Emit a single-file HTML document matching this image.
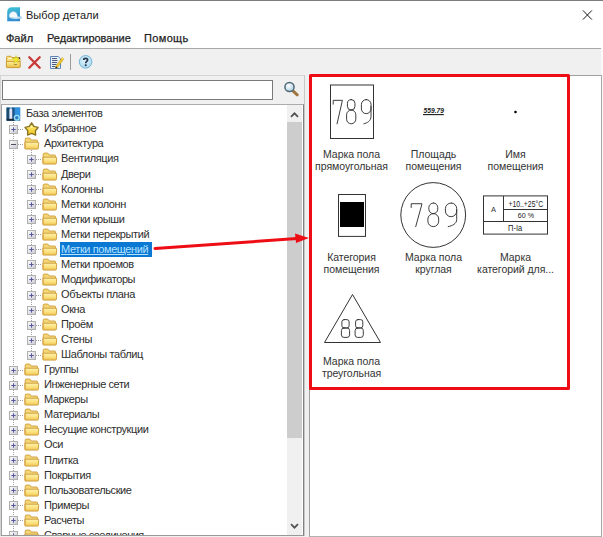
<!DOCTYPE html>
<html><head><meta charset="utf-8"><style>
*{margin:0;padding:0;box-sizing:border-box}
html,body{width:603px;height:537px;overflow:hidden;background:#f0f0f0;font-family:"Liberation Sans", sans-serif;}
.a{position:absolute}
.t{position:absolute;white-space:nowrap;font-size:11px;line-height:15px;color:#1e1e1e}
.tr{position:absolute;white-space:nowrap;font-size:11px;line-height:15px;color:#2e2e2e;letter-spacing:-0.4px}
.lb{position:absolute;white-space:nowrap;font-size:10.5px;line-height:12px;color:#333;text-align:center;width:90px;letter-spacing:-0.05px}
</style></head><body>

<div class="a" style="left:0;top:0;width:603px;height:48px;background:#fff"></div>
<div class="a" style="left:0;top:0;width:603px;height:1px;background:#7c7c7c"></div>
<div class="a" style="left:0;top:48px;width:601px;height:1px;background:#a8a8a8"></div>
<div class="a" style="left:601px;top:48px;width:2px;height:489px;background:#f9f9f9"></div>
<svg class="a" style="left:6px;top:6px" width="18" height="17" viewBox="0 0 18 17">
<defs><linearGradient id="tig" x1="0" y1="0" x2="0.2" y2="1"><stop offset="0" stop-color="#40c4d4"/><stop offset="1" stop-color="#2f8cd2"/></linearGradient></defs>
<path d="M1.2 15.2 V6.2 Q1.2 1.2 6.2 1.2 H14 V15.2 Z" fill="url(#tig)"/>
<path d="M3 10.6 C2.6 4.6 10.8 3.4 11.4 9.2 L11.8 10.4 C13.6 10.6 15.6 10.8 15.9 11.6 C15 12.9 11 13.2 7.5 12.8 C5 12.5 3.2 11.8 3 10.6 Z" fill="#f4f9fc" stroke="#6aaed8" stroke-width="0.6"/>
<path d="M4.4 8.4 C5 6.6 7 5.8 9 6.3" stroke="#d4e8f4" stroke-width="0.8" fill="none"/>
<path d="M3.8 11.3 C7 12.1 11.5 12.1 15.4 11.5" stroke="#9ccae6" stroke-width="0.6" fill="none"/>
</svg>
<div class="t" style="left:26px;top:8px;color:#1a1a1a">Выбор детали</div>
<svg class="a" style="left:582px;top:10px" width="11" height="11" viewBox="0 0 11 11">
<path d="M0.9 0.4 L9.9 9.6 M9.9 0.4 L0.9 9.6" stroke="#1a1a1a" stroke-width="1"/></svg>
<div class="t" style="left:6px;top:31px;-webkit-text-stroke:0.25px #1e1e1e">Файл</div>
<div class="t" style="left:47px;top:31px;-webkit-text-stroke:0.25px #1e1e1e">Редактирование</div>
<div class="t" style="left:144px;top:31px;letter-spacing:0.35px;-webkit-text-stroke:0.25px #1e1e1e">Помощь</div>
<svg class="a" style="left:5px;top:54px" width="17" height="16" viewBox="0 0 17 16">
<defs><linearGradient id="fg" x1="0" y1="0" x2="0" y2="1"><stop offset="0" stop-color="#fff0a0"/><stop offset="1" stop-color="#e9bc40"/></linearGradient></defs>
<path d="M1.5 13 V3.3 Q1.5 2.3 2.5 2.3 H6 L7 3.5 H14.2 Q15 3.5 15 4.3 V13 Z" fill="#f4dc7a" stroke="#c89a34" stroke-width="0.9"/>
<path d="M1.4 7.5 H15.1 V12.8 Q15.1 13.6 14.3 13.6 H2.2 Q1.4 13.6 1.4 12.8 Z" fill="url(#fg)" stroke="#c89a34" stroke-width="0.9"/>
<path d="M3 4.5 H7" stroke="#fff6c0" stroke-width="1"/>
<path d="M11 1.5 L11.9 4.4 L14.6 4.6 L12.5 6.4 L13.2 9.2 L11 7.6 L8.8 9.2 L9.5 6.4 L7.4 4.6 L10.1 4.4 Z" fill="#f2ec2a" stroke="#c4c020" stroke-width="0.5"/>
<path d="M9 10.5 H12" stroke="#9a8a30" stroke-width="0.9"/>
<path d="M14.2 3 L14.6 5" stroke="#404040" stroke-width="1"/>
</svg>
<svg class="a" style="left:27px;top:55px" width="15" height="15" viewBox="0 0 15 15">
<path d="M2.3 2.3 L12.7 12.7 M12.7 2.3 L2.3 12.7" stroke="#c83838" stroke-width="2.3" stroke-linecap="round"/>
</svg>
<svg class="a" style="left:49px;top:55px" width="16" height="15" viewBox="0 0 16 15">
<path d="M1.5 1.5 H9.2 L11.5 3.8 V13.5 H1.5 Z" fill="#e8eff8" stroke="#5c86b6"/>
<path d="M3 3.5 H8 M3 5.5 H8.5 M3 7.5 H8 M3 9.5 H7.5 M3 11.5 H6" stroke="#4a5a78" stroke-width="1"/>
<path d="M6.8 11.2 L13.2 2.4 L15 3.8 L8.6 12.6 L6.4 13.4 Z" fill="#f4ca28" stroke="#a88420" stroke-width="0.5"/>
<path d="M13.2 2.4 L15 3.8 L14.4 4.6 L12.6 3.2 Z" fill="#fff080"/>
<path d="M6.4 13.4 L6.8 11.2 L8.6 12.6 Z" fill="#1a1a1a"/>
</svg>
<div class="a" style="left:70px;top:54px;width:1px;height:16px;background:#9a9a9a"></div>
<svg class="a" style="left:78px;top:54px" width="16" height="16" viewBox="0 0 16 16">
<defs><radialGradient id="hg" cx="0.45" cy="0.4" r="0.65"><stop offset="0" stop-color="#e0f4fc"/><stop offset="1" stop-color="#a8d8ee"/></radialGradient></defs>
<circle cx="7.6" cy="7.8" r="6.3" fill="url(#hg)" stroke="#74b4d8" stroke-width="1"/>
<path d="M5.7 5.9 C5.7 3.9 9.6 3.8 9.6 5.9 C9.6 7.4 7.7 7.4 7.7 9.2" stroke="#26374e" stroke-width="1.7" fill="none"/>
<rect x="6.8" y="10.3" width="1.8" height="1.8" fill="#26374e"/>
</svg>
<div class="a" style="left:0;top:75px;width:305px;height:461px;border:1px solid #d4d4d4;border-right-color:#c8c8c8;background:#f0f0f0"></div>
<div class="a" style="left:2px;top:80px;width:271px;height:20px;border:1px solid #7a7a7a;background:#fff"></div>
<svg class="a" style="left:283px;top:81px" width="16" height="16" viewBox="0 0 16 16">
<defs><radialGradient id="mg" cx="0.4" cy="0.35" r="0.7"><stop offset="0" stop-color="#ffffff"/><stop offset="1" stop-color="#a8d0e0"/></radialGradient></defs>
<path d="M10.2 10.2 L14.2 13.8" stroke="#a07440" stroke-width="3" stroke-linecap="round"/>
<circle cx="6.5" cy="6" r="4.6" fill="url(#mg)" stroke="#506878" stroke-width="1.5"/>
</svg>
<div class="a" style="left:1px;top:104px;width:303px;height:432px;border:1px solid #828790;border-top-color:#acacac;border-left-color:#a0a0a0;border-bottom-color:#999999;border-right-color:#808080;background:#fff;overflow:hidden" id="tp">
<div class="a" style="left:285px;top:0;width:15px;height:430px;background:#f0f0f0"></div>
<div class="a" style="left:285px;top:17px;width:15px;height:316px;background:#cdcdcd"></div>
<svg class="a" style="left:287px;top:6px" width="11" height="8" viewBox="0 0 11 8"><path d="M2 5.8 L5.5 2.3 L9 5.8" stroke="#505050" stroke-width="1.7" fill="none"/></svg>
<svg class="a" style="left:287px;top:417px" width="11" height="8" viewBox="0 0 11 8"><path d="M2 2.2 L5.5 5.7 L9 2.2" stroke="#505050" stroke-width="1.7" fill="none"/></svg>
<div class="a" style="left:11px;top:15px;width:1px;height:416px;background:repeating-linear-gradient(#a0a0a0 0 1px,transparent 1px 2px)"></div>
<div class="a" style="left:29px;top:43px;width:1px;height:206px;background:repeating-linear-gradient(#a0a0a0 0 1px,transparent 1px 2px)"></div>
<svg width="0" height="0" style="position:absolute"><defs>
<linearGradient id="fold" x1="0" y1="0" x2="0" y2="1"><stop offset="0" stop-color="#fff3b0"/><stop offset="0.55" stop-color="#fbe07c"/><stop offset="1" stop-color="#f0c452"/></linearGradient>
<linearGradient id="box" x1="0" y1="0" x2="1" y2="1"><stop offset="0" stop-color="#ffffff"/><stop offset="1" stop-color="#c8c8d0"/></linearGradient>
<linearGradient id="stg" x1="0" y1="0" x2="0" y2="1"><stop offset="0" stop-color="#fff490"/><stop offset="1" stop-color="#f2c418"/></linearGradient>
</defs></svg>
<svg class="a" style="left:4.0px;top:1.5px" width="15" height="15" viewBox="0 0 15 15">
<rect x="0.5" y="0.5" width="13.7" height="13.3" fill="#2276b4"/>
<rect x="0.6" y="0.6" width="2.8" height="12" fill="#1b4c6c"/>
<rect x="6.2" y="0.6" width="2.4" height="11" fill="#1d5488"/>
<path d="M3.4 12 V3 Q3.4 1.2 4.8 1.2 Q6.2 1.2 6.2 3 V12 Z" fill="#e6e4f2"/>
<rect x="8.8" y="0.6" width="5.3" height="10.5" fill="#2f92de"/>
<rect x="0.6" y="11.8" width="8" height="2" fill="#1a2c3c"/>
<circle cx="10.8" cy="10.8" r="2.4" fill="#2a7ec8" stroke="#9ee0f6" stroke-width="1.3"/>
</svg>
<div class="tr" style="left:24px;top:1.3px">База элементов</div>
<div class="a" style="left:16px;top:24px;width:6px;height:1px;background:repeating-linear-gradient(90deg,#a0a0a0 0 1px,transparent 1px 2px)"></div>
<svg class="a" style="left:7.0px;top:20.0px" width="9" height="9" viewBox="0 0 9 9"><rect x="0.5" y="0.5" width="8" height="8" fill="url(#box)" stroke="#b0b0b0"/><path d="M2.3 4.5 H6.7 M4.5 2.3 V6.7" stroke="#5858a0" stroke-width="1"/></svg>
<svg class="a" style="left:21.6px;top:16.6px" width="16" height="15" viewBox="0 0 16 15"><path d="M7.60 0.80 L9.95 4.36 L14.16 5.44 L11.40 8.74 L11.61 13.06 L7.60 11.40 L3.59 13.06 L3.80 8.74 L1.04 5.44 L5.25 4.36 Z" fill="url(#stg)" stroke="#8a7428" stroke-width="1.4" stroke-linejoin="round"/><path d="M7.6 4 L8.6 6 L6.4 6 Z" fill="#fffbd0" opacity="0.8"/></svg>
<div class="tr" style="left:42px;top:16.3px">Избранное</div>
<div class="a" style="left:16px;top:39px;width:6px;height:1px;background:repeating-linear-gradient(90deg,#a0a0a0 0 1px,transparent 1px 2px)"></div>
<svg class="a" style="left:7.0px;top:35.0px" width="9" height="9" viewBox="0 0 9 9"><rect x="0.5" y="0.5" width="8" height="8" fill="url(#box)" stroke="#b0b0b0"/><path d="M2 4.5 H7" stroke="#505060" stroke-width="1"/></svg>
<svg class="a" style="left:22.2px;top:32.4px" width="16" height="13" viewBox="0 0 16 13">
<path d="M1.2 11.5 V2.2 Q1.2 1.1 2.3 1.1 H5.4 Q6.1 1.1 6.5 1.7 L7.3 3 H12.6 Q13.5 3 13.5 3.9 V11.5 Z" fill="#f4d676" stroke="#cc9c3c" stroke-width="0.9"/>
<path d="M0.8 5.2 H14.1 Q14.8 5.2 14.7 5.9 L14.3 11.4 Q14.2 12.1 13.5 12.1 H1.6 Q0.9 12.1 0.9 11.4 Z" fill="url(#fold)" stroke="#c99a3a" stroke-width="0.9"/>
<path d="M1.6 6.2 V11.3" stroke="#e2a848" stroke-width="0.8"/>
</svg>
<div class="tr" style="left:42px;top:31.4px">Архитектура</div>
<div class="a" style="left:34px;top:54px;width:6px;height:1px;background:repeating-linear-gradient(90deg,#a0a0a0 0 1px,transparent 1px 2px)"></div>
<svg class="a" style="left:25.0px;top:50.0px" width="9" height="9" viewBox="0 0 9 9"><rect x="0.5" y="0.5" width="8" height="8" fill="url(#box)" stroke="#b0b0b0"/><path d="M2.3 4.5 H6.7 M4.5 2.3 V6.7" stroke="#5858a0" stroke-width="1"/></svg>
<svg class="a" style="left:40.2px;top:47.4px" width="16" height="13" viewBox="0 0 16 13">
<path d="M1.2 11.5 V2.2 Q1.2 1.1 2.3 1.1 H5.4 Q6.1 1.1 6.5 1.7 L7.3 3 H12.6 Q13.5 3 13.5 3.9 V11.5 Z" fill="#f4d676" stroke="#cc9c3c" stroke-width="0.9"/>
<path d="M0.8 5.2 H14.1 Q14.8 5.2 14.7 5.9 L14.3 11.4 Q14.2 12.1 13.5 12.1 H1.6 Q0.9 12.1 0.9 11.4 Z" fill="url(#fold)" stroke="#c99a3a" stroke-width="0.9"/>
<path d="M1.6 6.2 V11.3" stroke="#e2a848" stroke-width="0.8"/>
</svg>
<div class="tr" style="left:59px;top:46.4px">Вентиляция</div>
<div class="a" style="left:34px;top:69px;width:6px;height:1px;background:repeating-linear-gradient(90deg,#a0a0a0 0 1px,transparent 1px 2px)"></div>
<svg class="a" style="left:25.0px;top:65.0px" width="9" height="9" viewBox="0 0 9 9"><rect x="0.5" y="0.5" width="8" height="8" fill="url(#box)" stroke="#b0b0b0"/><path d="M2.3 4.5 H6.7 M4.5 2.3 V6.7" stroke="#5858a0" stroke-width="1"/></svg>
<svg class="a" style="left:40.2px;top:62.5px" width="16" height="13" viewBox="0 0 16 13">
<path d="M1.2 11.5 V2.2 Q1.2 1.1 2.3 1.1 H5.4 Q6.1 1.1 6.5 1.7 L7.3 3 H12.6 Q13.5 3 13.5 3.9 V11.5 Z" fill="#f4d676" stroke="#cc9c3c" stroke-width="0.9"/>
<path d="M0.8 5.2 H14.1 Q14.8 5.2 14.7 5.9 L14.3 11.4 Q14.2 12.1 13.5 12.1 H1.6 Q0.9 12.1 0.9 11.4 Z" fill="url(#fold)" stroke="#c99a3a" stroke-width="0.9"/>
<path d="M1.6 6.2 V11.3" stroke="#e2a848" stroke-width="0.8"/>
</svg>
<div class="tr" style="left:59px;top:61.5px">Двери</div>
<div class="a" style="left:34px;top:84px;width:6px;height:1px;background:repeating-linear-gradient(90deg,#a0a0a0 0 1px,transparent 1px 2px)"></div>
<svg class="a" style="left:25.0px;top:80.0px" width="9" height="9" viewBox="0 0 9 9"><rect x="0.5" y="0.5" width="8" height="8" fill="url(#box)" stroke="#b0b0b0"/><path d="M2.3 4.5 H6.7 M4.5 2.3 V6.7" stroke="#5858a0" stroke-width="1"/></svg>
<svg class="a" style="left:40.2px;top:77.6px" width="16" height="13" viewBox="0 0 16 13">
<path d="M1.2 11.5 V2.2 Q1.2 1.1 2.3 1.1 H5.4 Q6.1 1.1 6.5 1.7 L7.3 3 H12.6 Q13.5 3 13.5 3.9 V11.5 Z" fill="#f4d676" stroke="#cc9c3c" stroke-width="0.9"/>
<path d="M0.8 5.2 H14.1 Q14.8 5.2 14.7 5.9 L14.3 11.4 Q14.2 12.1 13.5 12.1 H1.6 Q0.9 12.1 0.9 11.4 Z" fill="url(#fold)" stroke="#c99a3a" stroke-width="0.9"/>
<path d="M1.6 6.2 V11.3" stroke="#e2a848" stroke-width="0.8"/>
</svg>
<div class="tr" style="left:59px;top:76.6px">Колонны</div>
<div class="a" style="left:34px;top:99px;width:6px;height:1px;background:repeating-linear-gradient(90deg,#a0a0a0 0 1px,transparent 1px 2px)"></div>
<svg class="a" style="left:25.0px;top:95.0px" width="9" height="9" viewBox="0 0 9 9"><rect x="0.5" y="0.5" width="8" height="8" fill="url(#box)" stroke="#b0b0b0"/><path d="M2.3 4.5 H6.7 M4.5 2.3 V6.7" stroke="#5858a0" stroke-width="1"/></svg>
<svg class="a" style="left:40.2px;top:92.6px" width="16" height="13" viewBox="0 0 16 13">
<path d="M1.2 11.5 V2.2 Q1.2 1.1 2.3 1.1 H5.4 Q6.1 1.1 6.5 1.7 L7.3 3 H12.6 Q13.5 3 13.5 3.9 V11.5 Z" fill="#f4d676" stroke="#cc9c3c" stroke-width="0.9"/>
<path d="M0.8 5.2 H14.1 Q14.8 5.2 14.7 5.9 L14.3 11.4 Q14.2 12.1 13.5 12.1 H1.6 Q0.9 12.1 0.9 11.4 Z" fill="url(#fold)" stroke="#c99a3a" stroke-width="0.9"/>
<path d="M1.6 6.2 V11.3" stroke="#e2a848" stroke-width="0.8"/>
</svg>
<div class="tr" style="left:59px;top:91.6px">Метки колонн</div>
<div class="a" style="left:34px;top:114px;width:6px;height:1px;background:repeating-linear-gradient(90deg,#a0a0a0 0 1px,transparent 1px 2px)"></div>
<svg class="a" style="left:25.0px;top:110.0px" width="9" height="9" viewBox="0 0 9 9"><rect x="0.5" y="0.5" width="8" height="8" fill="url(#box)" stroke="#b0b0b0"/><path d="M2.3 4.5 H6.7 M4.5 2.3 V6.7" stroke="#5858a0" stroke-width="1"/></svg>
<svg class="a" style="left:40.2px;top:107.7px" width="16" height="13" viewBox="0 0 16 13">
<path d="M1.2 11.5 V2.2 Q1.2 1.1 2.3 1.1 H5.4 Q6.1 1.1 6.5 1.7 L7.3 3 H12.6 Q13.5 3 13.5 3.9 V11.5 Z" fill="#f4d676" stroke="#cc9c3c" stroke-width="0.9"/>
<path d="M0.8 5.2 H14.1 Q14.8 5.2 14.7 5.9 L14.3 11.4 Q14.2 12.1 13.5 12.1 H1.6 Q0.9 12.1 0.9 11.4 Z" fill="url(#fold)" stroke="#c99a3a" stroke-width="0.9"/>
<path d="M1.6 6.2 V11.3" stroke="#e2a848" stroke-width="0.8"/>
</svg>
<div class="tr" style="left:59px;top:106.7px">Метки крыши</div>
<div class="a" style="left:34px;top:129px;width:6px;height:1px;background:repeating-linear-gradient(90deg,#a0a0a0 0 1px,transparent 1px 2px)"></div>
<svg class="a" style="left:25.0px;top:125.0px" width="9" height="9" viewBox="0 0 9 9"><rect x="0.5" y="0.5" width="8" height="8" fill="url(#box)" stroke="#b0b0b0"/><path d="M2.3 4.5 H6.7 M4.5 2.3 V6.7" stroke="#5858a0" stroke-width="1"/></svg>
<svg class="a" style="left:40.2px;top:122.7px" width="16" height="13" viewBox="0 0 16 13">
<path d="M1.2 11.5 V2.2 Q1.2 1.1 2.3 1.1 H5.4 Q6.1 1.1 6.5 1.7 L7.3 3 H12.6 Q13.5 3 13.5 3.9 V11.5 Z" fill="#f4d676" stroke="#cc9c3c" stroke-width="0.9"/>
<path d="M0.8 5.2 H14.1 Q14.8 5.2 14.7 5.9 L14.3 11.4 Q14.2 12.1 13.5 12.1 H1.6 Q0.9 12.1 0.9 11.4 Z" fill="url(#fold)" stroke="#c99a3a" stroke-width="0.9"/>
<path d="M1.6 6.2 V11.3" stroke="#e2a848" stroke-width="0.8"/>
</svg>
<div class="tr" style="left:59px;top:121.7px">Метки перекрытий</div>
<div class="a" style="left:34px;top:144px;width:6px;height:1px;background:repeating-linear-gradient(90deg,#a0a0a0 0 1px,transparent 1px 2px)"></div>
<svg class="a" style="left:25.0px;top:140.0px" width="9" height="9" viewBox="0 0 9 9"><rect x="0.5" y="0.5" width="8" height="8" fill="url(#box)" stroke="#b0b0b0"/><path d="M2.3 4.5 H6.7 M4.5 2.3 V6.7" stroke="#5858a0" stroke-width="1"/></svg>
<svg class="a" style="left:40.2px;top:137.8px" width="16" height="13" viewBox="0 0 16 13">
<path d="M1.2 11.5 V2.2 Q1.2 1.1 2.3 1.1 H5.4 Q6.1 1.1 6.5 1.7 L7.3 3 H12.6 Q13.5 3 13.5 3.9 V11.5 Z" fill="#f4d676" stroke="#cc9c3c" stroke-width="0.9"/>
<path d="M0.8 5.2 H14.1 Q14.8 5.2 14.7 5.9 L14.3 11.4 Q14.2 12.1 13.5 12.1 H1.6 Q0.9 12.1 0.9 11.4 Z" fill="url(#fold)" stroke="#c99a3a" stroke-width="0.9"/>
<path d="M1.6 6.2 V11.3" stroke="#e2a848" stroke-width="0.8"/>
</svg>
<div class="a" style="left:58px;top:136.5px;width:92px;height:15px;background:#0b78d4"></div>
<div class="tr" style="left:59px;top:136.8px;color:#b4e2ff;text-decoration:underline">Метки помещений</div>
<div class="a" style="left:34px;top:159px;width:6px;height:1px;background:repeating-linear-gradient(90deg,#a0a0a0 0 1px,transparent 1px 2px)"></div>
<svg class="a" style="left:25.0px;top:155.0px" width="9" height="9" viewBox="0 0 9 9"><rect x="0.5" y="0.5" width="8" height="8" fill="url(#box)" stroke="#b0b0b0"/><path d="M2.3 4.5 H6.7 M4.5 2.3 V6.7" stroke="#5858a0" stroke-width="1"/></svg>
<svg class="a" style="left:40.2px;top:152.8px" width="16" height="13" viewBox="0 0 16 13">
<path d="M1.2 11.5 V2.2 Q1.2 1.1 2.3 1.1 H5.4 Q6.1 1.1 6.5 1.7 L7.3 3 H12.6 Q13.5 3 13.5 3.9 V11.5 Z" fill="#f4d676" stroke="#cc9c3c" stroke-width="0.9"/>
<path d="M0.8 5.2 H14.1 Q14.8 5.2 14.7 5.9 L14.3 11.4 Q14.2 12.1 13.5 12.1 H1.6 Q0.9 12.1 0.9 11.4 Z" fill="url(#fold)" stroke="#c99a3a" stroke-width="0.9"/>
<path d="M1.6 6.2 V11.3" stroke="#e2a848" stroke-width="0.8"/>
</svg>
<div class="tr" style="left:59px;top:151.8px">Метки проемов</div>
<div class="a" style="left:34px;top:174px;width:6px;height:1px;background:repeating-linear-gradient(90deg,#a0a0a0 0 1px,transparent 1px 2px)"></div>
<svg class="a" style="left:25.0px;top:170.0px" width="9" height="9" viewBox="0 0 9 9"><rect x="0.5" y="0.5" width="8" height="8" fill="url(#box)" stroke="#b0b0b0"/><path d="M2.3 4.5 H6.7 M4.5 2.3 V6.7" stroke="#5858a0" stroke-width="1"/></svg>
<svg class="a" style="left:40.2px;top:167.9px" width="16" height="13" viewBox="0 0 16 13">
<path d="M1.2 11.5 V2.2 Q1.2 1.1 2.3 1.1 H5.4 Q6.1 1.1 6.5 1.7 L7.3 3 H12.6 Q13.5 3 13.5 3.9 V11.5 Z" fill="#f4d676" stroke="#cc9c3c" stroke-width="0.9"/>
<path d="M0.8 5.2 H14.1 Q14.8 5.2 14.7 5.9 L14.3 11.4 Q14.2 12.1 13.5 12.1 H1.6 Q0.9 12.1 0.9 11.4 Z" fill="url(#fold)" stroke="#c99a3a" stroke-width="0.9"/>
<path d="M1.6 6.2 V11.3" stroke="#e2a848" stroke-width="0.8"/>
</svg>
<div class="tr" style="left:59px;top:166.9px">Модификаторы</div>
<div class="a" style="left:34px;top:190px;width:6px;height:1px;background:repeating-linear-gradient(90deg,#a0a0a0 0 1px,transparent 1px 2px)"></div>
<svg class="a" style="left:25.0px;top:186.0px" width="9" height="9" viewBox="0 0 9 9"><rect x="0.5" y="0.5" width="8" height="8" fill="url(#box)" stroke="#b0b0b0"/><path d="M2.3 4.5 H6.7 M4.5 2.3 V6.7" stroke="#5858a0" stroke-width="1"/></svg>
<svg class="a" style="left:40.2px;top:182.9px" width="16" height="13" viewBox="0 0 16 13">
<path d="M1.2 11.5 V2.2 Q1.2 1.1 2.3 1.1 H5.4 Q6.1 1.1 6.5 1.7 L7.3 3 H12.6 Q13.5 3 13.5 3.9 V11.5 Z" fill="#f4d676" stroke="#cc9c3c" stroke-width="0.9"/>
<path d="M0.8 5.2 H14.1 Q14.8 5.2 14.7 5.9 L14.3 11.4 Q14.2 12.1 13.5 12.1 H1.6 Q0.9 12.1 0.9 11.4 Z" fill="url(#fold)" stroke="#c99a3a" stroke-width="0.9"/>
<path d="M1.6 6.2 V11.3" stroke="#e2a848" stroke-width="0.8"/>
</svg>
<div class="tr" style="left:59px;top:181.9px">Объекты плана</div>
<div class="a" style="left:34px;top:205px;width:6px;height:1px;background:repeating-linear-gradient(90deg,#a0a0a0 0 1px,transparent 1px 2px)"></div>
<svg class="a" style="left:25.0px;top:201.0px" width="9" height="9" viewBox="0 0 9 9"><rect x="0.5" y="0.5" width="8" height="8" fill="url(#box)" stroke="#b0b0b0"/><path d="M2.3 4.5 H6.7 M4.5 2.3 V6.7" stroke="#5858a0" stroke-width="1"/></svg>
<svg class="a" style="left:40.2px;top:197.9px" width="16" height="13" viewBox="0 0 16 13">
<path d="M1.2 11.5 V2.2 Q1.2 1.1 2.3 1.1 H5.4 Q6.1 1.1 6.5 1.7 L7.3 3 H12.6 Q13.5 3 13.5 3.9 V11.5 Z" fill="#f4d676" stroke="#cc9c3c" stroke-width="0.9"/>
<path d="M0.8 5.2 H14.1 Q14.8 5.2 14.7 5.9 L14.3 11.4 Q14.2 12.1 13.5 12.1 H1.6 Q0.9 12.1 0.9 11.4 Z" fill="url(#fold)" stroke="#c99a3a" stroke-width="0.9"/>
<path d="M1.6 6.2 V11.3" stroke="#e2a848" stroke-width="0.8"/>
</svg>
<div class="tr" style="left:59px;top:196.9px">Окна</div>
<div class="a" style="left:34px;top:220px;width:6px;height:1px;background:repeating-linear-gradient(90deg,#a0a0a0 0 1px,transparent 1px 2px)"></div>
<svg class="a" style="left:25.0px;top:216.0px" width="9" height="9" viewBox="0 0 9 9"><rect x="0.5" y="0.5" width="8" height="8" fill="url(#box)" stroke="#b0b0b0"/><path d="M2.3 4.5 H6.7 M4.5 2.3 V6.7" stroke="#5858a0" stroke-width="1"/></svg>
<svg class="a" style="left:40.2px;top:213.0px" width="16" height="13" viewBox="0 0 16 13">
<path d="M1.2 11.5 V2.2 Q1.2 1.1 2.3 1.1 H5.4 Q6.1 1.1 6.5 1.7 L7.3 3 H12.6 Q13.5 3 13.5 3.9 V11.5 Z" fill="#f4d676" stroke="#cc9c3c" stroke-width="0.9"/>
<path d="M0.8 5.2 H14.1 Q14.8 5.2 14.7 5.9 L14.3 11.4 Q14.2 12.1 13.5 12.1 H1.6 Q0.9 12.1 0.9 11.4 Z" fill="url(#fold)" stroke="#c99a3a" stroke-width="0.9"/>
<path d="M1.6 6.2 V11.3" stroke="#e2a848" stroke-width="0.8"/>
</svg>
<div class="tr" style="left:59px;top:212.0px">Проём</div>
<div class="a" style="left:34px;top:235px;width:6px;height:1px;background:repeating-linear-gradient(90deg,#a0a0a0 0 1px,transparent 1px 2px)"></div>
<svg class="a" style="left:25.0px;top:231.0px" width="9" height="9" viewBox="0 0 9 9"><rect x="0.5" y="0.5" width="8" height="8" fill="url(#box)" stroke="#b0b0b0"/><path d="M2.3 4.5 H6.7 M4.5 2.3 V6.7" stroke="#5858a0" stroke-width="1"/></svg>
<svg class="a" style="left:40.2px;top:228.1px" width="16" height="13" viewBox="0 0 16 13">
<path d="M1.2 11.5 V2.2 Q1.2 1.1 2.3 1.1 H5.4 Q6.1 1.1 6.5 1.7 L7.3 3 H12.6 Q13.5 3 13.5 3.9 V11.5 Z" fill="#f4d676" stroke="#cc9c3c" stroke-width="0.9"/>
<path d="M0.8 5.2 H14.1 Q14.8 5.2 14.7 5.9 L14.3 11.4 Q14.2 12.1 13.5 12.1 H1.6 Q0.9 12.1 0.9 11.4 Z" fill="url(#fold)" stroke="#c99a3a" stroke-width="0.9"/>
<path d="M1.6 6.2 V11.3" stroke="#e2a848" stroke-width="0.8"/>
</svg>
<div class="tr" style="left:59px;top:227.1px">Стены</div>
<div class="a" style="left:34px;top:250px;width:6px;height:1px;background:repeating-linear-gradient(90deg,#a0a0a0 0 1px,transparent 1px 2px)"></div>
<svg class="a" style="left:25.0px;top:246.0px" width="9" height="9" viewBox="0 0 9 9"><rect x="0.5" y="0.5" width="8" height="8" fill="url(#box)" stroke="#b0b0b0"/><path d="M2.3 4.5 H6.7 M4.5 2.3 V6.7" stroke="#5858a0" stroke-width="1"/></svg>
<svg class="a" style="left:40.2px;top:243.1px" width="16" height="13" viewBox="0 0 16 13">
<path d="M1.2 11.5 V2.2 Q1.2 1.1 2.3 1.1 H5.4 Q6.1 1.1 6.5 1.7 L7.3 3 H12.6 Q13.5 3 13.5 3.9 V11.5 Z" fill="#f4d676" stroke="#cc9c3c" stroke-width="0.9"/>
<path d="M0.8 5.2 H14.1 Q14.8 5.2 14.7 5.9 L14.3 11.4 Q14.2 12.1 13.5 12.1 H1.6 Q0.9 12.1 0.9 11.4 Z" fill="url(#fold)" stroke="#c99a3a" stroke-width="0.9"/>
<path d="M1.6 6.2 V11.3" stroke="#e2a848" stroke-width="0.8"/>
</svg>
<div class="tr" style="left:59px;top:242.1px">Шаблоны таблиц</div>
<div class="a" style="left:16px;top:265px;width:6px;height:1px;background:repeating-linear-gradient(90deg,#a0a0a0 0 1px,transparent 1px 2px)"></div>
<svg class="a" style="left:7.0px;top:261.0px" width="9" height="9" viewBox="0 0 9 9"><rect x="0.5" y="0.5" width="8" height="8" fill="url(#box)" stroke="#b0b0b0"/><path d="M2.3 4.5 H6.7 M4.5 2.3 V6.7" stroke="#5858a0" stroke-width="1"/></svg>
<svg class="a" style="left:22.2px;top:258.2px" width="16" height="13" viewBox="0 0 16 13">
<path d="M1.2 11.5 V2.2 Q1.2 1.1 2.3 1.1 H5.4 Q6.1 1.1 6.5 1.7 L7.3 3 H12.6 Q13.5 3 13.5 3.9 V11.5 Z" fill="#f4d676" stroke="#cc9c3c" stroke-width="0.9"/>
<path d="M0.8 5.2 H14.1 Q14.8 5.2 14.7 5.9 L14.3 11.4 Q14.2 12.1 13.5 12.1 H1.6 Q0.9 12.1 0.9 11.4 Z" fill="url(#fold)" stroke="#c99a3a" stroke-width="0.9"/>
<path d="M1.6 6.2 V11.3" stroke="#e2a848" stroke-width="0.8"/>
</svg>
<div class="tr" style="left:42px;top:257.2px">Группы</div>
<div class="a" style="left:16px;top:280px;width:6px;height:1px;background:repeating-linear-gradient(90deg,#a0a0a0 0 1px,transparent 1px 2px)"></div>
<svg class="a" style="left:7.0px;top:276.0px" width="9" height="9" viewBox="0 0 9 9"><rect x="0.5" y="0.5" width="8" height="8" fill="url(#box)" stroke="#b0b0b0"/><path d="M2.3 4.5 H6.7 M4.5 2.3 V6.7" stroke="#5858a0" stroke-width="1"/></svg>
<svg class="a" style="left:22.2px;top:273.2px" width="16" height="13" viewBox="0 0 16 13">
<path d="M1.2 11.5 V2.2 Q1.2 1.1 2.3 1.1 H5.4 Q6.1 1.1 6.5 1.7 L7.3 3 H12.6 Q13.5 3 13.5 3.9 V11.5 Z" fill="#f4d676" stroke="#cc9c3c" stroke-width="0.9"/>
<path d="M0.8 5.2 H14.1 Q14.8 5.2 14.7 5.9 L14.3 11.4 Q14.2 12.1 13.5 12.1 H1.6 Q0.9 12.1 0.9 11.4 Z" fill="url(#fold)" stroke="#c99a3a" stroke-width="0.9"/>
<path d="M1.6 6.2 V11.3" stroke="#e2a848" stroke-width="0.8"/>
</svg>
<div class="tr" style="left:42px;top:272.2px">Инженерные сети</div>
<div class="a" style="left:16px;top:295px;width:6px;height:1px;background:repeating-linear-gradient(90deg,#a0a0a0 0 1px,transparent 1px 2px)"></div>
<svg class="a" style="left:7.0px;top:291.0px" width="9" height="9" viewBox="0 0 9 9"><rect x="0.5" y="0.5" width="8" height="8" fill="url(#box)" stroke="#b0b0b0"/><path d="M2.3 4.5 H6.7 M4.5 2.3 V6.7" stroke="#5858a0" stroke-width="1"/></svg>
<svg class="a" style="left:22.2px;top:288.2px" width="16" height="13" viewBox="0 0 16 13">
<path d="M1.2 11.5 V2.2 Q1.2 1.1 2.3 1.1 H5.4 Q6.1 1.1 6.5 1.7 L7.3 3 H12.6 Q13.5 3 13.5 3.9 V11.5 Z" fill="#f4d676" stroke="#cc9c3c" stroke-width="0.9"/>
<path d="M0.8 5.2 H14.1 Q14.8 5.2 14.7 5.9 L14.3 11.4 Q14.2 12.1 13.5 12.1 H1.6 Q0.9 12.1 0.9 11.4 Z" fill="url(#fold)" stroke="#c99a3a" stroke-width="0.9"/>
<path d="M1.6 6.2 V11.3" stroke="#e2a848" stroke-width="0.8"/>
</svg>
<div class="tr" style="left:42px;top:287.2px">Маркеры</div>
<div class="a" style="left:16px;top:310px;width:6px;height:1px;background:repeating-linear-gradient(90deg,#a0a0a0 0 1px,transparent 1px 2px)"></div>
<svg class="a" style="left:7.0px;top:306.0px" width="9" height="9" viewBox="0 0 9 9"><rect x="0.5" y="0.5" width="8" height="8" fill="url(#box)" stroke="#b0b0b0"/><path d="M2.3 4.5 H6.7 M4.5 2.3 V6.7" stroke="#5858a0" stroke-width="1"/></svg>
<svg class="a" style="left:22.2px;top:303.3px" width="16" height="13" viewBox="0 0 16 13">
<path d="M1.2 11.5 V2.2 Q1.2 1.1 2.3 1.1 H5.4 Q6.1 1.1 6.5 1.7 L7.3 3 H12.6 Q13.5 3 13.5 3.9 V11.5 Z" fill="#f4d676" stroke="#cc9c3c" stroke-width="0.9"/>
<path d="M0.8 5.2 H14.1 Q14.8 5.2 14.7 5.9 L14.3 11.4 Q14.2 12.1 13.5 12.1 H1.6 Q0.9 12.1 0.9 11.4 Z" fill="url(#fold)" stroke="#c99a3a" stroke-width="0.9"/>
<path d="M1.6 6.2 V11.3" stroke="#e2a848" stroke-width="0.8"/>
</svg>
<div class="tr" style="left:42px;top:302.3px">Материалы</div>
<div class="a" style="left:16px;top:325px;width:6px;height:1px;background:repeating-linear-gradient(90deg,#a0a0a0 0 1px,transparent 1px 2px)"></div>
<svg class="a" style="left:7.0px;top:321.0px" width="9" height="9" viewBox="0 0 9 9"><rect x="0.5" y="0.5" width="8" height="8" fill="url(#box)" stroke="#b0b0b0"/><path d="M2.3 4.5 H6.7 M4.5 2.3 V6.7" stroke="#5858a0" stroke-width="1"/></svg>
<svg class="a" style="left:22.2px;top:318.4px" width="16" height="13" viewBox="0 0 16 13">
<path d="M1.2 11.5 V2.2 Q1.2 1.1 2.3 1.1 H5.4 Q6.1 1.1 6.5 1.7 L7.3 3 H12.6 Q13.5 3 13.5 3.9 V11.5 Z" fill="#f4d676" stroke="#cc9c3c" stroke-width="0.9"/>
<path d="M0.8 5.2 H14.1 Q14.8 5.2 14.7 5.9 L14.3 11.4 Q14.2 12.1 13.5 12.1 H1.6 Q0.9 12.1 0.9 11.4 Z" fill="url(#fold)" stroke="#c99a3a" stroke-width="0.9"/>
<path d="M1.6 6.2 V11.3" stroke="#e2a848" stroke-width="0.8"/>
</svg>
<div class="tr" style="left:42px;top:317.4px">Несущие конструкции</div>
<div class="a" style="left:16px;top:340px;width:6px;height:1px;background:repeating-linear-gradient(90deg,#a0a0a0 0 1px,transparent 1px 2px)"></div>
<svg class="a" style="left:7.0px;top:336.0px" width="9" height="9" viewBox="0 0 9 9"><rect x="0.5" y="0.5" width="8" height="8" fill="url(#box)" stroke="#b0b0b0"/><path d="M2.3 4.5 H6.7 M4.5 2.3 V6.7" stroke="#5858a0" stroke-width="1"/></svg>
<svg class="a" style="left:22.2px;top:333.4px" width="16" height="13" viewBox="0 0 16 13">
<path d="M1.2 11.5 V2.2 Q1.2 1.1 2.3 1.1 H5.4 Q6.1 1.1 6.5 1.7 L7.3 3 H12.6 Q13.5 3 13.5 3.9 V11.5 Z" fill="#f4d676" stroke="#cc9c3c" stroke-width="0.9"/>
<path d="M0.8 5.2 H14.1 Q14.8 5.2 14.7 5.9 L14.3 11.4 Q14.2 12.1 13.5 12.1 H1.6 Q0.9 12.1 0.9 11.4 Z" fill="url(#fold)" stroke="#c99a3a" stroke-width="0.9"/>
<path d="M1.6 6.2 V11.3" stroke="#e2a848" stroke-width="0.8"/>
</svg>
<div class="tr" style="left:42px;top:332.4px">Оси</div>
<div class="a" style="left:16px;top:355px;width:6px;height:1px;background:repeating-linear-gradient(90deg,#a0a0a0 0 1px,transparent 1px 2px)"></div>
<svg class="a" style="left:7.0px;top:351.0px" width="9" height="9" viewBox="0 0 9 9"><rect x="0.5" y="0.5" width="8" height="8" fill="url(#box)" stroke="#b0b0b0"/><path d="M2.3 4.5 H6.7 M4.5 2.3 V6.7" stroke="#5858a0" stroke-width="1"/></svg>
<svg class="a" style="left:22.2px;top:348.5px" width="16" height="13" viewBox="0 0 16 13">
<path d="M1.2 11.5 V2.2 Q1.2 1.1 2.3 1.1 H5.4 Q6.1 1.1 6.5 1.7 L7.3 3 H12.6 Q13.5 3 13.5 3.9 V11.5 Z" fill="#f4d676" stroke="#cc9c3c" stroke-width="0.9"/>
<path d="M0.8 5.2 H14.1 Q14.8 5.2 14.7 5.9 L14.3 11.4 Q14.2 12.1 13.5 12.1 H1.6 Q0.9 12.1 0.9 11.4 Z" fill="url(#fold)" stroke="#c99a3a" stroke-width="0.9"/>
<path d="M1.6 6.2 V11.3" stroke="#e2a848" stroke-width="0.8"/>
</svg>
<div class="tr" style="left:42px;top:347.5px">Плитка</div>
<div class="a" style="left:16px;top:370px;width:6px;height:1px;background:repeating-linear-gradient(90deg,#a0a0a0 0 1px,transparent 1px 2px)"></div>
<svg class="a" style="left:7.0px;top:366.0px" width="9" height="9" viewBox="0 0 9 9"><rect x="0.5" y="0.5" width="8" height="8" fill="url(#box)" stroke="#b0b0b0"/><path d="M2.3 4.5 H6.7 M4.5 2.3 V6.7" stroke="#5858a0" stroke-width="1"/></svg>
<svg class="a" style="left:22.2px;top:363.5px" width="16" height="13" viewBox="0 0 16 13">
<path d="M1.2 11.5 V2.2 Q1.2 1.1 2.3 1.1 H5.4 Q6.1 1.1 6.5 1.7 L7.3 3 H12.6 Q13.5 3 13.5 3.9 V11.5 Z" fill="#f4d676" stroke="#cc9c3c" stroke-width="0.9"/>
<path d="M0.8 5.2 H14.1 Q14.8 5.2 14.7 5.9 L14.3 11.4 Q14.2 12.1 13.5 12.1 H1.6 Q0.9 12.1 0.9 11.4 Z" fill="url(#fold)" stroke="#c99a3a" stroke-width="0.9"/>
<path d="M1.6 6.2 V11.3" stroke="#e2a848" stroke-width="0.8"/>
</svg>
<div class="tr" style="left:42px;top:362.5px">Покрытия</div>
<div class="a" style="left:16px;top:385px;width:6px;height:1px;background:repeating-linear-gradient(90deg,#a0a0a0 0 1px,transparent 1px 2px)"></div>
<svg class="a" style="left:7.0px;top:381.0px" width="9" height="9" viewBox="0 0 9 9"><rect x="0.5" y="0.5" width="8" height="8" fill="url(#box)" stroke="#b0b0b0"/><path d="M2.3 4.5 H6.7 M4.5 2.3 V6.7" stroke="#5858a0" stroke-width="1"/></svg>
<svg class="a" style="left:22.2px;top:378.6px" width="16" height="13" viewBox="0 0 16 13">
<path d="M1.2 11.5 V2.2 Q1.2 1.1 2.3 1.1 H5.4 Q6.1 1.1 6.5 1.7 L7.3 3 H12.6 Q13.5 3 13.5 3.9 V11.5 Z" fill="#f4d676" stroke="#cc9c3c" stroke-width="0.9"/>
<path d="M0.8 5.2 H14.1 Q14.8 5.2 14.7 5.9 L14.3 11.4 Q14.2 12.1 13.5 12.1 H1.6 Q0.9 12.1 0.9 11.4 Z" fill="url(#fold)" stroke="#c99a3a" stroke-width="0.9"/>
<path d="M1.6 6.2 V11.3" stroke="#e2a848" stroke-width="0.8"/>
</svg>
<div class="tr" style="left:42px;top:377.6px">Пользовательские</div>
<div class="a" style="left:16px;top:400px;width:6px;height:1px;background:repeating-linear-gradient(90deg,#a0a0a0 0 1px,transparent 1px 2px)"></div>
<svg class="a" style="left:7.0px;top:396.0px" width="9" height="9" viewBox="0 0 9 9"><rect x="0.5" y="0.5" width="8" height="8" fill="url(#box)" stroke="#b0b0b0"/><path d="M2.3 4.5 H6.7 M4.5 2.3 V6.7" stroke="#5858a0" stroke-width="1"/></svg>
<svg class="a" style="left:22.2px;top:393.6px" width="16" height="13" viewBox="0 0 16 13">
<path d="M1.2 11.5 V2.2 Q1.2 1.1 2.3 1.1 H5.4 Q6.1 1.1 6.5 1.7 L7.3 3 H12.6 Q13.5 3 13.5 3.9 V11.5 Z" fill="#f4d676" stroke="#cc9c3c" stroke-width="0.9"/>
<path d="M0.8 5.2 H14.1 Q14.8 5.2 14.7 5.9 L14.3 11.4 Q14.2 12.1 13.5 12.1 H1.6 Q0.9 12.1 0.9 11.4 Z" fill="url(#fold)" stroke="#c99a3a" stroke-width="0.9"/>
<path d="M1.6 6.2 V11.3" stroke="#e2a848" stroke-width="0.8"/>
</svg>
<div class="tr" style="left:42px;top:392.6px">Примеры</div>
<div class="a" style="left:16px;top:415px;width:6px;height:1px;background:repeating-linear-gradient(90deg,#a0a0a0 0 1px,transparent 1px 2px)"></div>
<svg class="a" style="left:7.0px;top:411.0px" width="9" height="9" viewBox="0 0 9 9"><rect x="0.5" y="0.5" width="8" height="8" fill="url(#box)" stroke="#b0b0b0"/><path d="M2.3 4.5 H6.7 M4.5 2.3 V6.7" stroke="#5858a0" stroke-width="1"/></svg>
<svg class="a" style="left:22.2px;top:408.6px" width="16" height="13" viewBox="0 0 16 13">
<path d="M1.2 11.5 V2.2 Q1.2 1.1 2.3 1.1 H5.4 Q6.1 1.1 6.5 1.7 L7.3 3 H12.6 Q13.5 3 13.5 3.9 V11.5 Z" fill="#f4d676" stroke="#cc9c3c" stroke-width="0.9"/>
<path d="M0.8 5.2 H14.1 Q14.8 5.2 14.7 5.9 L14.3 11.4 Q14.2 12.1 13.5 12.1 H1.6 Q0.9 12.1 0.9 11.4 Z" fill="url(#fold)" stroke="#c99a3a" stroke-width="0.9"/>
<path d="M1.6 6.2 V11.3" stroke="#e2a848" stroke-width="0.8"/>
</svg>
<div class="tr" style="left:42px;top:407.6px">Расчеты</div>
<div class="a" style="left:16px;top:430px;width:6px;height:1px;background:repeating-linear-gradient(90deg,#a0a0a0 0 1px,transparent 1px 2px)"></div>
<svg class="a" style="left:7.0px;top:426.0px" width="9" height="9" viewBox="0 0 9 9"><rect x="0.5" y="0.5" width="8" height="8" fill="url(#box)" stroke="#b0b0b0"/><path d="M2.3 4.5 H6.7 M4.5 2.3 V6.7" stroke="#5858a0" stroke-width="1"/></svg>
<svg class="a" style="left:22.2px;top:423.7px" width="16" height="13" viewBox="0 0 16 13">
<path d="M1.2 11.5 V2.2 Q1.2 1.1 2.3 1.1 H5.4 Q6.1 1.1 6.5 1.7 L7.3 3 H12.6 Q13.5 3 13.5 3.9 V11.5 Z" fill="#f4d676" stroke="#cc9c3c" stroke-width="0.9"/>
<path d="M0.8 5.2 H14.1 Q14.8 5.2 14.7 5.9 L14.3 11.4 Q14.2 12.1 13.5 12.1 H1.6 Q0.9 12.1 0.9 11.4 Z" fill="url(#fold)" stroke="#c99a3a" stroke-width="0.9"/>
<path d="M1.6 6.2 V11.3" stroke="#e2a848" stroke-width="0.8"/>
</svg>
<div class="tr" style="left:42px;top:422.7px;letter-spacing:-0.55px">Сварные соединения</div>
</div>
<div class="a" style="left:309px;top:75px;width:293px;height:462px;border:1px solid #a0a0a0;border-right-color:#a8a8a8;border-bottom-color:#b0b0b0;background:#fff"></div>
<svg class="a" style="left:310px;top:76px" width="292" height="320" viewBox="310 76 292 320">
<g fill="none" stroke="#333" stroke-width="1">
<rect x="330.5" y="85" width="43" height="53.5"/>
<rect x="338.5" y="194.5" width="27" height="41.9"/>
<circle cx="433.2" cy="215" r="32.4"/>
<rect x="483.5" y="195.9" width="64" height="38.2"/>
<path d="M503.5 195.9 V221.5 M503.5 209.5 H547.5 M483.5 221.5 H547.5"/>
<path d="M352.5 294.5 L324.5 342.5 H380.5 Z"/>
</g>
<rect x="340" y="202" width="24" height="25" fill="#000"/>
<circle cx="515.5" cy="112" r="1.3" fill="#000"/>
</svg>
<svg class="a" style="left:0;top:0" width="603" height="537" viewBox="0 0 603 537"><g fill="none" stroke="#333" stroke-width="0.95" stroke-linecap="round" stroke-linejoin="round"><path d="M333.20 104.20 V100.33 H342.40 L337.06 123.80"/><rect x="347.43" y="99.60" width="7.54" height="10.41" rx="3.77" ry="3.77"/><rect x="346.60" y="110.01" width="9.20" height="13.79" rx="4.60" ry="4.60"/><rect x="361.40" y="99.60" width="9.60" height="14.04" rx="4.80" ry="4.80"/><path d="M371.00 106.62 V116.54 C371.00 120.90 367.16 123.07 363.80 123.80"/><path d="M411.20 207.48 V203.71 H422.00 L415.74 226.60"/><rect x="428.87" y="203.00" width="8.86" height="10.62" rx="4.43" ry="4.43"/><rect x="427.90" y="213.62" width="10.80" height="12.98" rx="5.40" ry="5.40"/><rect x="445.40" y="203.00" width="11.30" height="13.69" rx="5.65" ry="5.65"/><path d="M456.70 209.84 V219.52 C456.70 223.77 452.18 225.89 448.22 226.60"/><rect x="341.89" y="319.60" width="7.22" height="8.37" rx="2.24" ry="2.24"/><rect x="341.40" y="327.97" width="8.20" height="9.43" rx="2.54" ry="2.54"/><rect x="355.59" y="319.60" width="7.22" height="8.37" rx="2.24" ry="2.24"/><rect x="355.10" y="327.97" width="8.20" height="9.43" rx="2.54" ry="2.54"/></g></svg>
<svg class="a" style="left:0;top:0" width="603" height="537" viewBox="0 0 603 537">
<g fill="#1a1a1a" font-family="Liberation Sans, sans-serif">
<text x="423.6" y="113.3" font-size="6.6" font-weight="bold" font-style="italic" textLength="20.4" lengthAdjust="spacingAndGlyphs">559.79</text>
<text x="491" y="211.8" font-size="7.6" textLength="5" lengthAdjust="spacingAndGlyphs" fill="#333">A</text>
<text x="508.4" y="206.9" font-size="8.2" textLength="34.8" lengthAdjust="spacingAndGlyphs" fill="#222">+10..+25°C</text>
<text x="517.8" y="218.2" font-size="7.2" textLength="16.2" lengthAdjust="spacingAndGlyphs" fill="#222">60 %</text>
<text x="508" y="231.2" font-size="8.2" textLength="14.2" lengthAdjust="spacingAndGlyphs" fill="#222">П-Iа</text>
</g>
<path d="M423 114.6 H443.8" stroke="#1a1a1a" stroke-width="1.1"/>
</svg>
<div class="lb" style="left:306.5px;top:147.5px">Марка пола<br>прямоугольная</div>
<div class="lb" style="left:388.5px;top:147.5px">Площадь<br>помещения</div>
<div class="lb" style="left:470.5px;top:147.5px">Имя<br>помещения</div>
<div class="lb" style="left:306.5px;top:251px">Категория<br>помещения</div>
<div class="lb" style="left:388.5px;top:251px">Марка пола<br>круглая</div>
<div class="lb" style="left:470.5px;top:251px">Марка<br>категорий для...</div>
<div class="lb" style="left:306.5px;top:354.5px">Марка пола<br>треугольная</div>
<svg class="a" style="left:0;top:0" width="603" height="537" viewBox="0 0 603 537">
<rect x="310.5" y="75.5" width="258" height="313" fill="none" stroke="#ee0d14" stroke-width="3" stroke-linejoin="round"/>
<path d="M155 248.5 L297 238.6" stroke="#ee0d14" stroke-width="3" stroke-linecap="round"/>
<path d="M309 238 L295 233.5 L296 243 Z" fill="#ee0d14"/>
</svg>
</body></html>
